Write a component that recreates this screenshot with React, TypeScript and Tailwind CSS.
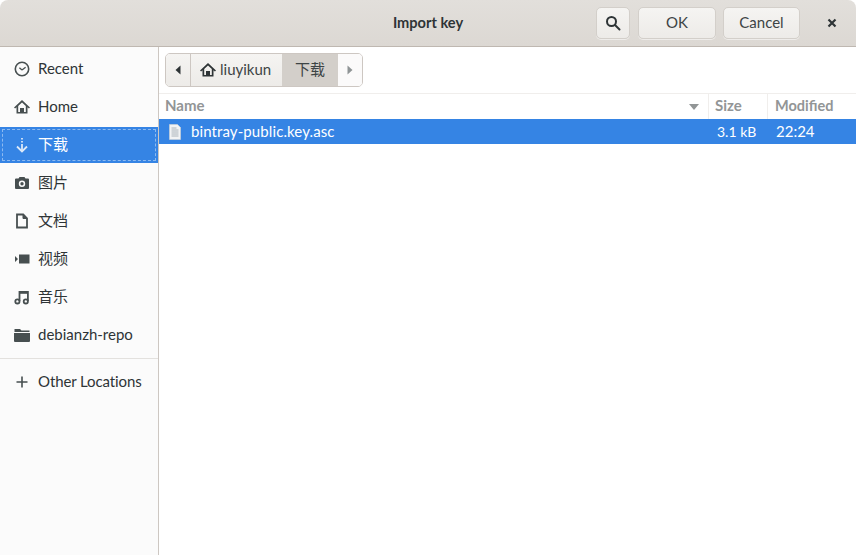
import React from 'react';

const cjk = "font-['Lato','Noto_Sans_CJK_SC',sans-serif]";

const iconClass = 'w-4 h-4 text-[#474f50]';

const RecentIcon = () => (
  <svg viewBox="0 0 16 16" className={iconClass} fill="none" stroke="currentColor" strokeWidth="1.6">
    <circle cx="8" cy="8" r="6.7" />
    <path d="M8 9 11.600 6.200M8 9 5.400 6.800" strokeWidth="1.300" />
  </svg>
);
const HomeIcon = ({ className = iconClass }: { className?: string }) => (
  <svg viewBox="0 0 16 16" className={className} fill="currentColor">
    <path fillRule="evenodd" d="M8 1 0 8.400l1.100 1.100L2.500 8.200v6.300h11V8.200l1.400 1.300L16 8.400 8 1ZM8 3.500l3.800 3.500v5.900H10V9H6v3.900H4.200V7L8 3.500Z" />
  </svg>
);
const DownloadIcon = () => (
  <svg viewBox="0 0 16 16" className="w-4 h-4 text-[#dbe8f8]" fill="none" stroke="currentColor" strokeWidth="1.800">
    <path d="M8 1v1.500M8 4v1.500M8 7v6.500" />
    <path d="M3 9.500 8 14.500 13 9.500" />
  </svg>
);
const CameraIcon = () => (
  <svg viewBox="0 0 16 16" className={iconClass} fill="currentColor">
    <path fillRule="evenodd" d="M5.500 2 4.500 3.500H2a1 1 0 0 0-1 1V13a1 1 0 0 0 1 1h12a1 1 0 0 0 1-1V4.500a1 1 0 0 0-1-1h-2.500L10.500 2h-5ZM8 5.500a3.200 3.200 0 1 1 0 6.400 3.200 3.200 0 0 1 0-6.400ZM8 7a1.700 1.700 0 1 0 0 3.400A1.700 1.700 0 0 0 8 7Z" />
  </svg>
);
const DocIcon = () => (
  <svg viewBox="0 0 16 16" className={iconClass} fill="none" stroke="currentColor" strokeWidth="1.800">
    <path d="M3 1.500h6.200L13 5.400v9.100H3V1.500Z" />
    <path d="M9 1.500v4h4" fill="currentColor" strokeWidth="1" />
  </svg>
);
const VideoIcon = () => (
  <svg viewBox="0 0 16 16" className={iconClass} fill="currentColor">
    <path d="M5 3.500h10.500v9H5zM1 5l3 3-3 3z" />
  </svg>
);
const MusicIcon = () => (
  <svg viewBox="0 0 16 16" className={iconClass} fill="none" stroke="currentColor" strokeWidth="1.800">
    <circle cx="3.400" cy="12.400" r="2.100" />
    <circle cx="11.800" cy="12.400" r="2.100" />
    <path d="M5.500 12V2.800h8.400V12" />
    <path d="M5.500 3.600h8.400" strokeWidth="2.400" />
  </svg>
);
const FolderIcon = () => (
  <svg viewBox="0 0 16 16" className={iconClass} fill="currentColor">
    <path d="M0.500 2h5.500l1.500 1.500H15.500V5H0.500V2Z" />
    <path d="M0 6h16v8a1 1 0 0 1-1 1H1a1 1 0 0 1-1-1V6Z" />
  </svg>
);
const PlusIcon = () => (
  <svg viewBox="0 0 16 16" className={iconClass} fill="currentColor">
    <path d="M7.200 2.500h1.600v4.700h4.700v1.600H8.800v4.700H7.200V8.800H2.500V7.200h4.700V2.500Z" />
  </svg>
);

const places = [
  { label: 'Recent', icon: <RecentIcon /> },
  { label: 'Home', icon: <HomeIcon /> },
  { label: '下载', icon: <DownloadIcon />, active: true },
  { label: '图片', icon: <CameraIcon /> },
  { label: '文档', icon: <DocIcon /> },
  { label: '视频', icon: <VideoIcon /> },
  { label: '音乐', icon: <MusicIcon /> },
  { label: 'debianzh-repo', icon: <FolderIcon /> },
];

const HeaderButton = ({ className, children }: { className: string; children: React.ReactNode }) => (
  <button className={`h-[32px] pb-[2px] rounded-[5px] border border-[#d3cfca] bg-gradient-to-b from-[#f5f4f2] to-[#edebe8] shadow-[0_1px_0_#ffffff80] flex items-center justify-center text-[#3d4445] ${className}`}>
    {children}
  </button>
);

export default function App() {
  return (
    <div className={`w-[856px] h-[555px] bg-white overflow-hidden flex flex-col rounded-t-[8px] text-[15px] text-[#2e3436] ${cjk}`}>
      <header className="relative h-[47px] shrink-0 bg-gradient-to-b from-[#e2dfdb] to-[#dcd8d3] border-b border-[#bfb8b1] flex items-center justify-end pl-2">
        <div className="absolute inset-x-0 top-0 h-full flex items-center justify-center font-bold text-[14.6px] text-[#2e3436] pointer-events-none">Import key</div>
        <HeaderButton className="w-[34px] mr-[8px] !pb-0">
          <svg viewBox="0 0 16 16" className="w-4 h-4" fill="none" stroke="#2e3436" strokeWidth="2">
            <circle cx="6.500" cy="6.500" r="4.500" />
            <path d="M10 10l4.500 4.500" strokeLinecap="round" />
          </svg>
        </HeaderButton>
        <HeaderButton className="w-[78px] mr-[7px]">OK</HeaderButton>
        <HeaderButton className="w-[77px]">Cancel</HeaderButton>
        <div className="w-[56px] flex items-center justify-center pl-[8px]">
          <svg viewBox="0 0 16 16" className="w-4 h-4" fill="none" stroke="#2e3436" strokeWidth="2.200">
            <path d="M4.500 4.500l7 7M11.500 4.500l-7 7" />
          </svg>
        </div>
      </header>
      <div className="flex-1 flex min-h-0">
        <aside className="w-[159px] shrink-0 bg-[#fbfbfb] border-r border-[#cdc7c2] flex flex-col pt-[3px]">
          {places.map(p => (
            <div
              key={p.label}
              className={`shrink-0 flex items-center gap-[8px] pl-[14px] ${p.active ? 'h-[36px] my-px bg-[#3584e4] text-white outline-1 outline-dashed -outline-offset-3 outline-[#ffffff70]' : 'h-[38px]'}`}
            >
              <span className="w-4 h-4 flex items-center justify-center shrink-0">{p.icon}</span>
              <span className="leading-none pb-[2px]">{p.label}</span>
            </div>
          ))}
          <div className="h-px bg-[#e3e1de] mt-[4px]" />
          <div className="h-[46px] shrink-0 flex items-center gap-[8px] pl-[14px]">
            <span className="w-4 h-4 flex items-center justify-center shrink-0"><PlusIcon /></span>
            <span className="pb-[2px] tracking-[-0.1px]">Other Locations</span>
          </div>
        </aside>
        <main className="flex-1 min-w-0 flex flex-col bg-white">
          <div className="h-[46px] shrink-0 flex items-center pl-[6px]">
            <nav className="h-[34px] flex rounded-[5px] border border-[#cdc7c2] overflow-hidden">
              <div className="w-[25px] border-r border-[#cdc7c2] bg-gradient-to-b from-[#f5f4f2] to-[#edebe8] flex items-center justify-center">
                <svg viewBox="0 0 8 10" className="w-2 h-2.5" fill="#2e3436"><path d="M6.500 0.500v9L1.500 5z" /></svg>
              </div>
              <div className="w-[91px] bg-gradient-to-b from-[#f5f4f2] to-[#edebe8] flex items-center gap-[4px] pl-[9px] text-[#3d4445]">
                <HomeIcon className="w-4 h-4 text-[#2e3436]" />
                <span className="pb-[2px]">liuyikun</span>
              </div>
              <div className="w-[56px] bg-[#d3cfca] flex items-center justify-center text-[#3d4445] pb-[2px]">下载</div>
              <div className="w-[24px] bg-[#fbfafa] flex items-center justify-center">
                <svg viewBox="0 0 8 10" className="w-2 h-2.5" fill="#8f9495"><path d="M1.500 0.500v9L6.500 5z" /></svg>
              </div>
            </nav>
          </div>
          <div className="h-[26px] shrink-0 flex border-t border-[#f0eeec] text-[#929596] font-bold">
            <div className="flex-1 flex items-center pl-[6px] pr-[9px] justify-between border-r border-[#f0eeec]">
              <span className="pb-[2px]">Name</span>
              <svg viewBox="0 0 10 6" className="w-[10px] h-[6px]" fill="#919596"><path d="M0 0h10L5 6z" /></svg>
            </div>
            <div className="w-[59px] flex items-center pl-[6px] border-r border-[#f0eeec]"><span className="pb-[2px]">Size</span></div>
            <div className="w-[88px] flex items-center pl-[7px] text-[14.5px]"><span className="pb-[2px]">Modified</span></div>
          </div>
          <div className="h-[25px] shrink-0 bg-[#3584e4] text-white flex items-center">
            <div className="flex-1 flex items-center gap-[8px] pl-[8px]">
              <svg viewBox="0 0 16 16" className="w-4 h-4" fill="none">
                <path d="M2.500 0.500h8l3 3v12h-11z" fill="#f2f3f4" stroke="#c8d0d8" strokeWidth="0.700" />
                <path d="M4.500 4h5M4.500 6h7M4.500 8h7M4.500 10h7M4.500 12h7" stroke="#9aa3ad" strokeWidth="0.800" />
              </svg>
              <span className="tracking-[0.1px]">bintray-public.key.asc</span>
            </div>
            <div className="w-[59px] pl-[8px] text-[14px]">3.1 kB</div>
            <div className="w-[88px] pl-[8px]">22:24</div>
          </div>
        </main>
      </div>
    </div>
  );
}
